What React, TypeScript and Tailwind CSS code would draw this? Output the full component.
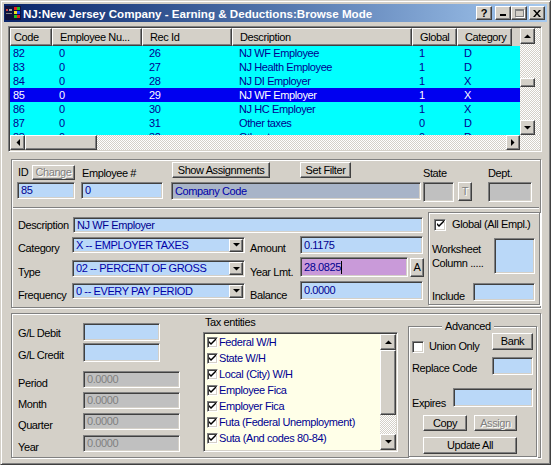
import React, { ReactNode } from "react";

const sunken =
    "border border-t-[#808080] border-l-[#808080] border-b-white border-r-white shadow-[inset_1px_1px_#404040,inset_-1px_-1px_#d4d0c8]";
const raised =
    "border border-t-white border-l-white border-b-[#404040] border-r-[#404040] shadow-[inset_-1px_-1px_#808080] bg-[#d4d0c8]";
const etched = "border border-[#808080] shadow-[inset_1px_1px_#fff,1px_1px_#fff]";
const hatch =
    "bg-[image:repeating-conic-gradient(#d4d0c8_0_25%,#ffffff_0_50%)] bg-[length:2px_2px]";

const rows = [
    { code: "82", emp: "0", rec: "26", desc: "NJ WF Employee", global: "1", cat: "D" },
    { code: "83", emp: "0", rec: "27", desc: "NJ Health Employee", global: "1", cat: "D" },
    { code: "84", emp: "0", rec: "28", desc: "NJ DI Employer", global: "1", cat: "X" },
    { code: "85", emp: "0", rec: "29", desc: "NJ WF Employer", global: "1", cat: "X" },
    { code: "86", emp: "0", rec: "30", desc: "NJ HC Employer", global: "1", cat: "X" },
    { code: "87", emp: "0", rec: "31", desc: "Other taxes", global: "0", cat: "D" },
    { code: "88", emp: "0", rec: "32", desc: "Other taxes", global: "0", cat: "D" }
];

const taxEntities = [
    "Federal W/H",
    "State W/H",
    "Local (City) W/H",
    "Employee Fica",
    "Employer Fica",
    "Futa (Federal Unemployment)",
    "Suta (And codes 80-84)"
];

const Arrow = ({ dir }: { dir: "up" | "down" | "left" | "right" }) => {
    if (dir === "up" || dir === "down")
        return (
            <svg width="7" height="4" viewBox="0 0 7 4">
                <polygon
                    points={dir === "up" ? "0,4 7,4 3.5,0.5" : "0,0 7,0 3.5,3.5"}
                    fill="#000"
                />
            </svg>
        );
    return (
        <svg width="4" height="7" viewBox="0 0 4 7">
            <polygon points={dir === "left" ? "4,0 4,7 0.5,3.5" : "0,0 0,7 3.5,3.5"} fill="#000" />
        </svg>
    );
};

const Btn = ({
    children,
    className = "",
    disabled
}: {
    children: ReactNode;
    className?: string;
    disabled?: boolean;
}) => (
    <div
        className={`${raised} flex items-center justify-center shrink-0 ${
            disabled ? "text-[#808080] [text-shadow:1px_1px_0_#fff]" : "text-black"
        } ${className}`}
    >
        {children}
    </div>
);

const Input = ({
    value,
    className = "",
    bg = "bg-[#bad8f8]",
    color = "text-[#000090]"
}: {
    value?: string;
    className?: string;
    bg?: string;
    color?: string;
}) => (
    <div className={`${sunken} ${bg} ${color} shrink-0 flex items-center pl-[3px] overflow-hidden ${className}`}>
        {value}
    </div>
);

const Combo = ({ value, className = "" }: { value: string; className?: string }) => (
    <div
        className={`${sunken} bg-[#bad8f8] text-[#0000a8] shrink-0 w-[173px] flex items-center pl-[3px] ${className}`}
    >
        <span className="flex-1">{value}</span>
        <div className={`${raised} w-[14px] h-[13px] mr-[1px] flex items-center justify-center`}>
            <Arrow dir="down" />
        </div>
    </div>
);

const Check = ({ checked, className = "" }: { checked?: boolean; className?: string }) => (
    <div className={`${sunken} bg-white shrink-0 flex items-center justify-center ${className}`}>
        {checked && (
            <svg width="7" height="7" viewBox="0 0 7 7">
                <path d="M0 2 L0 4 L2 6 L7 1 L7 -1 L2 4 Z" fill="#000" />
            </svg>
        )}
    </div>
);

const AppIcon = () => (
    <svg width="16" height="14" viewBox="0 0 16 14" className="shrink-0">
        <rect width="16" height="14" fill="#10103a" />
        <rect x="1" y="3" width="2" height="2" fill="#d04040" />
        <rect x="4" y="3" width="3" height="2" fill="#a0a0a0" />
        <rect x="1" y="7" width="6" height="1" fill="#808080" />
        <rect x="9" y="1" width="3" height="3" fill="#e02020" />
        <rect x="12" y="1" width="3" height="3" fill="#20c020" />
        <rect x="9" y="5" width="3" height="3" fill="#f0e020" />
        <rect x="12" y="5" width="3" height="3" fill="#2040f0" />
        <rect x="9" y="9" width="3" height="3" fill="#20c020" />
        <rect x="12" y="9" width="3" height="3" fill="#e02020" />
    </svg>
);

const TitleBar = () => (
    <div className="h-[18px] flex items-center bg-linear-to-r from-[#0a246a] to-[#a6caf0] pl-[1px] pr-[2px]">
        <AppIcon />
        <span className="ml-[2px] text-white font-bold text-[11.6px] tracking-[0px] whitespace-nowrap">
            NJ:New Jersey Company - Earning &amp; Deductions:Browse Mode
        </span>
        <div className="ml-auto flex">
            <Btn className="w-[16px] h-[14px] font-bold text-[11px] leading-none">?</Btn>
            <Btn className="ml-[3px] w-[16px] h-[14px] items-end pb-[3px]">
                <div className="w-[6px] h-[2px] bg-black" />
            </Btn>
            <Btn className="w-[16px] h-[14px]">
                <div className="w-[9px] h-[8px] border border-[#808080] border-t-2 shadow-[1px_1px_#fff]" />
            </Btn>
            <Btn className="ml-[2px] w-[16px] h-[14px]">
                <svg width="8" height="7" viewBox="0 0 8 7">
                    <path d="M0 0 L2 0 L4 2.5 L6 0 L8 0 L5 3.5 L8 7 L6 7 L4 4.5 L2 7 L0 7 L3 3.5 Z" fill="#000" />
                </svg>
            </Btn>
        </div>
    </div>
);

const cols = [
    { name: "Code", w: "w-[42px]", pad: "pl-[3px]", key: "code" },
    { name: "Employee Nu...", w: "w-[90px]", pad: "pl-[7px]", key: "emp" },
    { name: "Rec Id", w: "w-[90px]", pad: "pl-[7px]", key: "rec" },
    { name: "Description", w: "w-[180px]", pad: "pl-[7px]", key: "desc" },
    { name: "Global", w: "w-[45px]", pad: "pl-[7px]", key: "global" },
    { name: "Category", w: "w-[55px]", pad: "pl-[7px]", key: "cat" }
] as const;

const BrowseGrid = () => (
    <div className={`${sunken} mt-[4px] ml-[4px] w-[534px] h-[126px] p-px flex flex-col`}>
        <div className="flex h-[107px]">
            <div className="w-[510px] flex flex-col">
                <div className="flex h-[18px] bg-[#d4d0c8]">
                    {cols.map((c) => (
                        <div key={c.key} className={`${raised} ${c.w} ${c.pad} flex items-center`}>
                            {c.name}
                        </div>
                    ))}
                    <div className="flex-1" />
                </div>
                <div className="h-[89px] overflow-hidden bg-[#00ffff]">
                    {rows.map((r) => {
                        const sel = r.code === "85";
                        return (
                            <div
                                key={r.code}
                                className={`flex h-[14px] items-center ${
                                    sel ? "bg-[#0000f0] text-white" : "text-[#000090]"
                                }`}
                            >
                                {cols.map((c) => (
                                    <div key={c.key} className={`${c.w} ${c.pad} shrink-0`}>
                                        {r[c.key]}
                                    </div>
                                ))}
                            </div>
                        );
                    })}
                </div>
            </div>
            <div className={`w-[20px] ${hatch} flex flex-col`}>
                <Btn className="w-[15px] h-[16px]">
                    <Arrow dir="up" />
                </Btn>
                <Btn className="w-[15px] h-[9px] mt-[34px]">{null}</Btn>
                <Btn className="w-[15px] h-[15px] mt-[33px]">
                    <Arrow dir="down" />
                </Btn>
            </div>
        </div>
        <div className={`flex h-[15px] ${hatch}`}>
            <Btn className="w-[15px] h-[15px]">
                <Arrow dir="left" />
            </Btn>
            <Btn className="w-[72px] h-[15px]">{null}</Btn>
            <div className="w-[409px]" />
            <Btn className="w-[14px] h-[15px]">
                <Arrow dir="right" />
            </Btn>
        </div>
    </div>
);

const TopPanel = () => (
    <div className={`${etched} mt-[7px] ml-[7px] w-[530px] h-[149px] flex flex-col`}>
        <div className="flex items-start h-[20px] mt-[2px]">
            <span className="ml-[6px] mt-[4px] w-[14px] shrink-0">ID</span>
            <Btn className="w-[43px] h-[15px] mt-[3px]" disabled>
                Change
            </Btn>
            <span className="ml-[7px] mt-[5px] w-[89px] shrink-0">Employee #</span>
            <Btn className="ml-[1px] w-[98px] h-[16px]">Show Assignments</Btn>
            <Btn className="ml-[30px] w-[51px] h-[16px]">Set Filter</Btn>
            <span className="ml-[72px] mt-[5px] w-[65px] shrink-0">State</span>
            <span className="mt-[5px]">Dept.</span>
        </div>
        <div className="flex items-start">
            <Input className="ml-[5px] w-[58px] h-[17px]" value="85" />
            <Input className="ml-[6px] w-[82px] h-[17px]" value="0" />
            <Input
                className="ml-[8px] w-[250px] h-[18px]"
                bg="bg-[#a8b4c8]"
                color="text-[#0000a8]"
                value="Company Code"
            />
            <Input className="ml-[2px] w-[31px] h-[20px]" bg="bg-[#c0c0c0]" />
            <Btn className="ml-[4px] w-[14px] h-[19px]" disabled>
                T
            </Btn>
            <Input className="ml-[16px] w-[44px] h-[20px]" bg="bg-[#c0c0c0]" />
        </div>
        <div className="mt-[5px] mx-[1px] h-[2px] border-t border-t-[#808080] border-b border-b-white" />
        <div className="flex items-start">
            <div className="w-[416px] flex flex-col shrink-0">
                <div className="mt-[8px] h-[16px] flex items-center">
                    <span className="ml-[6px] w-[55px] shrink-0">Description</span>
                    <Input className="w-[350px] h-[16px]" value="NJ WF Employer" />
                </div>
                <div className="mt-[3px] h-[18px] flex items-start">
                    <span className="ml-[6px] mt-[6px] w-[54px] shrink-0">Category</span>
                    <Combo className="mt-[1px] h-[16px]" value="X -- EMPLOYER TAXES" />
                    <span className="ml-[5px] mt-[6px] w-[50px] shrink-0">Amount</span>
                    <Input className="w-[123px] h-[18px]" value="0.1175" />
                </div>
                <div className="mt-[3px] h-[20px] flex items-start">
                    <span className="ml-[6px] mt-[9px] w-[54px] shrink-0">Type</span>
                    <Combo className="mt-[3px] h-[17px]" value="02 -- PERCENT OF GROSS" />
                    <span className="ml-[5px] mt-[9px] w-[50px] shrink-0">Year Lmt.</span>
                    <div
                        className={`${sunken} bg-[#c99ad9] text-[#000090] w-[108px] h-[20px] shrink-0 flex items-center pl-[3px]`}
                    >
                        28.0825
                        <span className="w-px h-[13px] bg-black" />
                    </div>
                    <Btn className="ml-[2px] mt-[1px] w-[14px] h-[19px]">A</Btn>
                </div>
                <div className="mt-[4px] h-[19px] flex items-start">
                    <span className="ml-[6px] mt-[8px] w-[54px] shrink-0">Frequency</span>
                    <Combo className="mt-[2px] h-[16px]" value="0 -- EVERY PAY PERIOD" />
                    <span className="ml-[5px] mt-[8px] w-[50px] shrink-0">Balance</span>
                    <Input className="w-[123px] h-[19px]" value="0.0000" />
                </div>
            </div>
            <div className={`${etched} mt-[3px] w-[112px] h-[93px] flex flex-col shrink-0`}>
                <div className="mt-[5px] flex items-center">
                    <Check checked className="ml-[5px] w-[12px] h-[12px]" />
                    <span className="ml-[6px] whitespace-nowrap">Global (All Empl.)</span>
                </div>
                <div className="mt-[7px] flex items-start">
                    <span className="ml-[3px] mt-[4px] w-[62px] leading-[14px] shrink-0">
                        Worksheet
                        <br />
                        Column .....
                    </span>
                    <Input className="w-[41px] h-[36px]" />
                </div>
                <div className="mt-[9px] flex items-start">
                    <span className="ml-[3px] mt-[7px] w-[41px] shrink-0">Include</span>
                    <Input className="w-[62px] h-[18px]" />
                </div>
            </div>
        </div>
    </div>
);

const BottomPanel = () => (
    <div className={`${etched} mt-[5px] ml-[7px] w-[530px] h-[145px] flex items-start`}>
        <div className="ml-[6px] w-[162px] flex flex-col shrink-0">
            <div className="mt-[9px] h-[18px] flex items-start">
                <span className="mt-[4px] w-[65px] shrink-0">G/L Debit</span>
                <Input className="w-[77px] h-[18px]" />
            </div>
            <div className="mt-[2px] h-[19px] flex items-start">
                <span className="mt-[6px] w-[65px] shrink-0">G/L Credit</span>
                <Input className="w-[77px] h-[19px]" />
            </div>
            {["Period", "Month", "Quarter", "Year"].map((l, i) => (
                <div
                    key={l}
                    className={`${i === 0 ? "mt-[9px]" : i === 3 ? "mt-[5px]" : "mt-[4px]"} h-[17px] flex items-start`}
                >
                    <span className="mt-[6px] w-[65px] shrink-0">{l}</span>
                    <Input
                        className="w-[97px] h-[17px]"
                        bg="bg-[#c0c0c0]"
                        color="text-[#808080]"
                        value="0.0000"
                    />
                </div>
            ))}
        </div>
        <div className="ml-[23px] w-[195px] flex flex-col shrink-0">
            <span className="mt-[2px] pl-[2px]">Tax entities</span>
            <div className={`${sunken} mt-[3px] h-[120px] bg-[#ffffe8] p-px flex`}>
                <div className="flex-1 flex flex-col">
                    {taxEntities.map((t) => (
                        <div key={t} className="h-[16px] flex items-center text-[#000090] whitespace-nowrap">
                            <Check checked className="ml-[2px] w-[11px] h-[11px]" />
                            <span className="ml-px">{t}</span>
                        </div>
                    ))}
                </div>
                <div className={`w-[16px] flex flex-col ${hatch}`}>
                    <Btn className="w-[16px] h-[16px]">
                        <Arrow dir="up" />
                    </Btn>
                    <Btn className="w-[16px] h-[65px]">{null}</Btn>
                    <div className="h-[19px]" />
                    <Btn className="w-[16px] h-[16px]">
                        <Arrow dir="down" />
                    </Btn>
                </div>
            </div>
        </div>
        <div className={`${etched} relative ml-[10px] mt-[12px] w-[129px] h-[131px] flex flex-col shrink-0`}>
            <span className="absolute -top-[7px] left-[33px] px-[3px] bg-[#d4d0c8]">Advanced</span>
            <div className="mt-[6px] h-[17px] flex items-start">
                <Check className="ml-[3px] mt-[8px] w-[12px] h-[12px]" />
                <span className="ml-[5px] mt-[7px]">Union Only</span>
                <Btn className="ml-auto mr-[3px] w-[41px] h-[17px]">Bank</Btn>
            </div>
            <div className="mt-[7px] h-[18px] flex items-start">
                <span className="ml-[3px] mt-[5px]">Replace Code</span>
                <Input className="ml-auto mr-[3px] w-[41px] h-[18px]" />
            </div>
            <div className="mt-[13px] h-[19px] flex items-start">
                <span className="ml-[3px] mt-[9px]">Expires</span>
                <Input className="ml-auto mr-[3px] w-[80px] h-[19px]" />
            </div>
            <div className="mt-[8px] flex">
                <Btn className="ml-[14px] w-[44px] h-[16px]">Copy</Btn>
                <Btn className="ml-[7px] w-[43px] h-[16px]" disabled>
                    Assign
                </Btn>
            </div>
            <Btn className="mt-[6px] ml-[14px] w-[94px] h-[17px]">Update All</Btn>
        </div>
    </div>
);

export default function App() {
    return (
        <div className="w-[551px] h-[465px] overflow-hidden bg-[#d4d0c8] border border-t-[#d4d0c8] border-l-[#d4d0c8] border-b-[#404040] border-r-[#404040] shadow-[inset_1px_1px_#fff,inset_-1px_-1px_#808080] p-[3px] font-['Liberation_Sans',Arial,sans-serif] text-[11px] leading-[13px] tracking-[-0.4px] text-black">
            <TitleBar />
            <BrowseGrid />
            <TopPanel />
            <BottomPanel />
        </div>
    );
}
